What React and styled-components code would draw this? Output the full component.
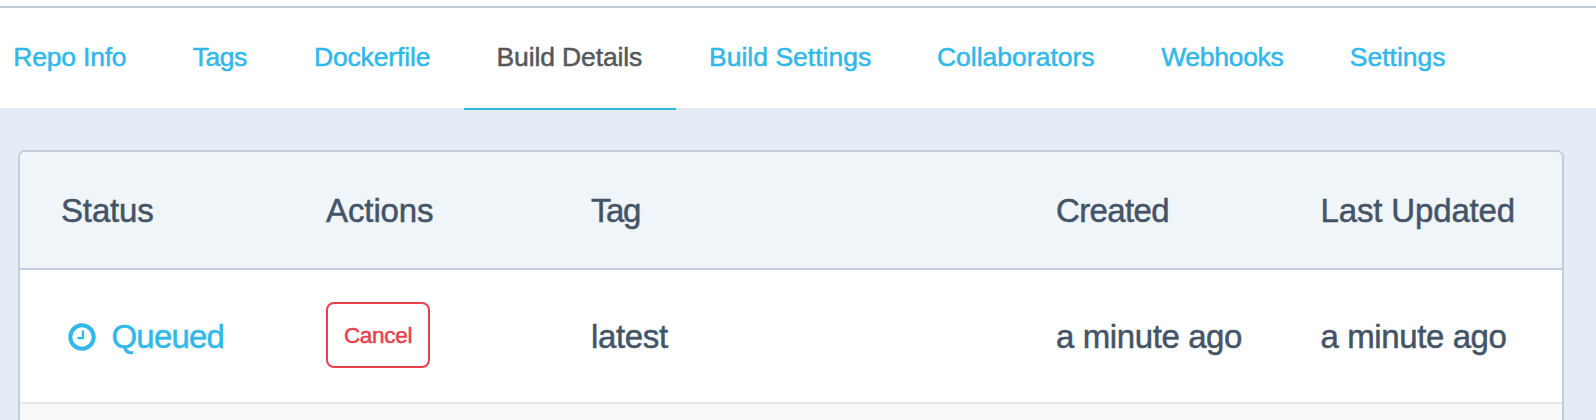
import React from "react";
import styled, { createGlobalStyle } from "styled-components";

const GlobalStyle = createGlobalStyle`
  *, *::before, *::after { box-sizing: border-box; }
  body {
    margin: 0;
    overflow: hidden;
    background: #e5ecf5;
    font-family: "Liberation Sans", Arial, sans-serif;
    color: #445467;
    -webkit-text-stroke: 0.5px currentColor;
  }
`;

const Page = styled.div`
  height: 420px;
  overflow: hidden;
  display: flex;
  flex-direction: column;
`;

const TopStrip = styled.div`
  flex: none;
  height: 8px;
  background: #fff;
  border-bottom: 2px solid #c0cbd5;
`;

const Nav = styled.nav`
  flex: none;
  display: flex;
  height: 102px;
  padding-left: 12.7px;
  background: linear-gradient(#fff 100px, #e0e9f2 100px);
`;

const Tab = styled.a`
  flex: none;
  width: ${(p) => p.$width}px;
  margin-left: ${(p) => (p.$first ? -32 : 0)}px;
  padding-left: ${(p) => p.$inset || 32.6}px;
  border-bottom: 2px solid ${(p) => (p.$active ? "#30b8e9" : "transparent")};
  color: ${(p) => (p.$active ? "#555759" : "#30b8e9")};
  font-size: 26.5px;
  line-height: 98px;
  letter-spacing: ${(p) => p.$spacing}px;
  white-space: nowrap;
`;

const Card = styled.section`
  flex: none;
  width: 1546px;
  height: 300px;
  margin: 40px 0 0 18px;
  border: 2px solid #c4cddc;
  border-radius: 7px;
  background: #f9f9f9;
  overflow: hidden;
`;

const Row = styled.div`
  display: grid;
  grid-template-columns: 265px 265px 465px 264.5px 1fr;
  align-items: center;
  padding-left: 41px;
  font-size: 33px;
  line-height: 40px;
  white-space: nowrap;
`;

const HeaderRow = styled(Row)`
  height: 118px;
  background: #f0f5fa;
  border-bottom: 2px solid #c4cddc;
`;

const BuildRow = styled(Row)`
  height: 134px;
  background: #fff;
  border-bottom: 2px solid #e5e5e5;
`;

const Cell = styled.div`
  padding-top: 2px;
  letter-spacing: ${(p) => p.$spacing || 0}px;
`;

const Status = styled.div`
  display: flex;
  align-items: center;
  gap: 15.5px;
  padding: 2px 0 0 7px;
  color: #30b8e9;
  letter-spacing: -0.8px;

  svg { flex: none; margin-top: -1px; }
`;

const CancelButton = styled.button`
  width: 104px;
  height: 66px;
  margin-bottom: 2px;
  padding: 2px 0 0;
  display: block;
  border: 2px solid #e8404c;
  border-radius: 8px;
  background: #fff;
  color: #e8404c;
  font: 22.5px/60px "Liberation Sans", Arial, sans-serif;
  letter-spacing: -0.3px;
`;

const tabs = [
  { label: "Repo Info", width: 180, spacing: -0.2 },
  { label: "Tags", width: 120.6, spacing: -0.5, inset: 32 },
  { label: "Dockerfile", width: 182.7, spacing: -0.13 },
  { label: "Build Details", width: 212, spacing: -0.13 },
  { label: "Build Settings", width: 228.4, spacing: 0.02, inset: 33 },
  { label: "Collaborators", width: 225.2, spacing: 0 },
  { label: "Webhooks", width: 187.7, spacing: -0.3, inset: 31.6 },
  { label: "Settings", width: 160, spacing: 0 },
];

const activeTab = "Build Details";

function ClockIcon() {
  return (
    <svg width="28" height="28" viewBox="0 0 28 28" fill="none" stroke="currentColor">
      <circle cx="14" cy="14" r="11.7" strokeWidth="4" />
      <path d="M14.9 7.6V15.1H9.4" strokeWidth="2.3" />
    </svg>
  );
}

export default function App() {
  return (
    <Page>
      <GlobalStyle />
      <TopStrip />
      <Nav>
        {tabs.map((t, i) => (
          <Tab
            key={t.label}
            $width={t.width}
            $spacing={t.spacing}
            $inset={t.inset}
            $active={t.label === activeTab}
            $first={i === 0}
          >
            {t.label}
          </Tab>
        ))}
      </Nav>
      <Card>
        <HeaderRow>
          <Cell $spacing={-0.15}>Status</Cell>
          <Cell $spacing={-0.1}>Actions</Cell>
          <Cell $spacing={-1.4}>Tag</Cell>
          <Cell $spacing={-0.65}>Created</Cell>
          <Cell $spacing={-0.15}>Last Updated</Cell>
        </HeaderRow>
        <BuildRow>
          <Status>
            <ClockIcon />
            <span>Queued</span>
          </Status>
          <CancelButton>Cancel</CancelButton>
          <Cell $spacing={-0.35}>latest</Cell>
          <Cell $spacing={-0.4}>a minute ago</Cell>
          <Cell $spacing={-0.4}>a minute ago</Cell>
        </BuildRow>
      </Card>
    </Page>
  );
}
